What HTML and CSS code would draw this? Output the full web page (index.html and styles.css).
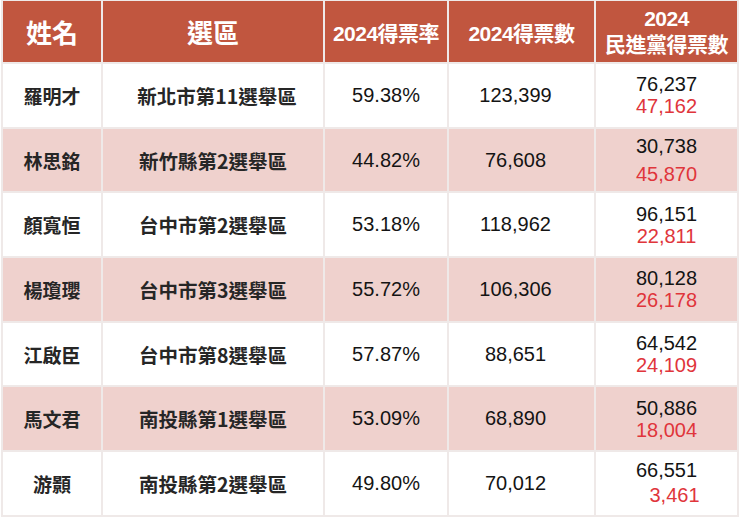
FILE: index.html
```html
<!DOCTYPE html>
<html lang="zh-Hant">
<head>
<meta charset="utf-8">
<title>2024 立委得票</title>
<link rel="stylesheet" href="styles.css">
</head>
<body>
<div class="table">
  <div class="cell head name-h">姓名</div>
  <div class="cell head name-h">選區</div>
  <div class="cell head sub-h">2024得票率</div>
  <div class="cell head sub-h">2024得票數</div>
  <div class="cell head sub-h two">2024<br>民進黨得票數</div>

  <div class="cell name">羅明才</div>
  <div class="cell dist shift">新北市第11選舉區</div>
  <div class="cell num">59.38%</div>
  <div class="cell num votes">123,399</div>
  <div class="cell num pair"><span>76,237</span><span class="dpp">47,162</span></div>

  <div class="cell name alt">林思銘</div>
  <div class="cell dist alt">新竹縣第2選舉區</div>
  <div class="cell num alt">44.82%</div>
  <div class="cell num votes alt">76,608</div>
  <div class="cell num pair wide alt"><span>30,738</span><span class="dpp">45,870</span></div>

  <div class="cell name">顏寬恒</div>
  <div class="cell dist">台中市第2選舉區</div>
  <div class="cell num">53.18%</div>
  <div class="cell num votes">118,962</div>
  <div class="cell num pair"><span>96,151</span><span class="dpp">22,811</span></div>

  <div class="cell name alt">楊瓊瓔</div>
  <div class="cell dist alt">台中市第3選舉區</div>
  <div class="cell num alt">55.72%</div>
  <div class="cell num votes alt">106,306</div>
  <div class="cell num pair alt"><span>80,128</span><span class="dpp">26,178</span></div>

  <div class="cell name">江啟臣</div>
  <div class="cell dist">台中市第8選舉區</div>
  <div class="cell num">57.87%</div>
  <div class="cell num votes">88,651</div>
  <div class="cell num pair"><span>64,542</span><span class="dpp">24,109</span></div>

  <div class="cell name alt">馬文君</div>
  <div class="cell dist alt">南投縣第1選舉區</div>
  <div class="cell num alt">53.09%</div>
  <div class="cell num votes alt">68,890</div>
  <div class="cell num pair alt"><span>50,886</span><span class="dpp">18,004</span></div>

  <div class="cell name">游顥</div>
  <div class="cell dist">南投縣第2選舉區</div>
  <div class="cell num">49.80%</div>
  <div class="cell num votes">70,012</div>
  <div class="cell num pair mid"><span>66,551</span><span class="dpp right">3,461</span></div>
</div>
</body>
</html>
```

FILE: styles.css
```css
html, body {
  margin: 0;
  padding: 0;
  background: #ffffff;
}

body {
  font-family: "Noto Sans CJK TC", "Noto Sans", sans-serif;
}

.table {
  display: grid;
  grid-template-columns: 98px 220px 122px 145px 141px;
  grid-template-rows: 61px repeat(7, 62.7px);
  gap: 2px;
  background: #efe9e8;
  width: 734px;
  margin: 0 0 0 1px;
  padding: 1px 2px 2px 2px;
}

.cell {
  display: flex;
  align-items: center;
  justify-content: center;
  background: #ffffff;
  text-align: center;
}

.head {
  background: #c1563f;
  color: #ffffff;
  font-weight: 700;
}

.name-h {
  font-size: 26px;
}

.sub-h {
  font-family: "Liberation Sans", "Noto Sans CJK TC", sans-serif;
  font-size: 21px;
  letter-spacing: -0.5px;
}

.sub-h.two {
  line-height: 26px;
  padding-top: 1px;
}

.alt {
  background: #efd1cd;
}

.name {
  font-size: 19px;
  font-weight: 700;
  color: #262626;
}

.dist {
  font-size: 19.5px;
  font-weight: 700;
  color: #262626;
}

.dist.shift {
  padding-left: 8px;
}

.num {
  font-family: "Liberation Sans", Arial, sans-serif;
  font-size: 20px;
  color: #141414;
}

.votes {
  padding-right: 12px;
}

.pair {
  flex-direction: column;
  line-height: 22px;
}

.pair.wide {
  line-height: 28px;
}

.pair.mid {
  line-height: 25px;
}

.dpp {
  color: #e0353b;
}

.dpp.right {
  padding-left: 16px;
}
```
